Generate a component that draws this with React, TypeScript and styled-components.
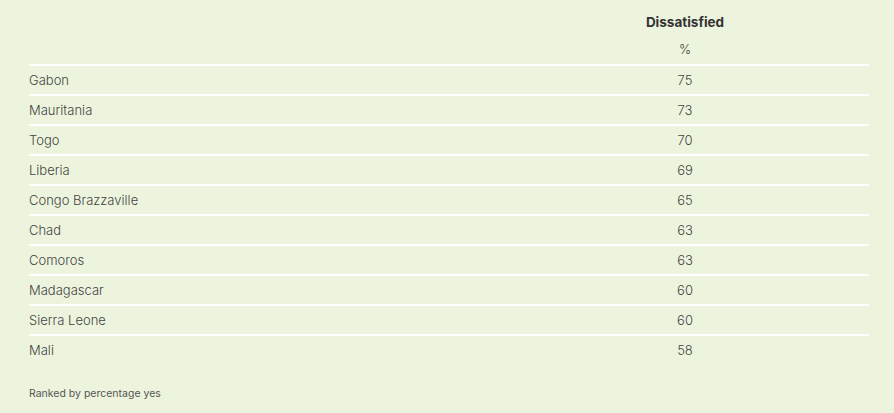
import styled, { createGlobalStyle } from "styled-components";

const rows: [string, number][] = [
  ["Gabon", 75],
  ["Mauritania", 73],
  ["Togo", 70],
  ["Liberia", 69],
  ["Congo Brazzaville", 65],
  ["Chad", 63],
  ["Comoros", 63],
  ["Madagascar", 60],
  ["Sierra Leone", 60],
  ["Mali", 58],
];

const Global = createGlobalStyle`
  html, body {
    margin: 0;
    background: #edf4de;
    font-family: Inter, "Noto Sans", sans-serif;
  }
`;

const App = () => {
  return (
    <Page>
      <Global />
      <Table>
        <HeadRow>
          <span />
          <HeadCell>Dissatisfied</HeadCell>
        </HeadRow>
        <UnitRow>
          <span />
          <Unit>%</Unit>
        </UnitRow>
        {rows.map(([country, value]) => (
          <Row key={country}>
            <Country>{country}</Country>
            <Value>{value}</Value>
          </Row>
        ))}
      </Table>
      <Note>Ranked by percentage yes</Note>
    </Page>
  );
};

export default App;

const Page = styled.div`
  width: 894px;
  height: 413px;
  padding: 12px 25px 0 29px;
  box-sizing: border-box;
`;

const Table = styled.div`
  display: flex;
  flex-direction: column;
`;

const Grid = styled.div`
  display: grid;
  grid-template-columns: 472px 1fr;
  align-items: center;
`;

const HeadRow = styled(Grid)`
  height: 20px;
`;

const HeadCell = styled.div`
  text-align: center;
  font-weight: 700;
  font-size: 13.5px;
  color: #333333;
`;

const UnitRow = styled(Grid)`
  height: 32px;
  padding-bottom: 2px;
  box-sizing: border-box;
`;

const Unit = styled.div`
  text-align: center;
  font-size: 13px;
  font-weight: 300;
  color: #444444;
  padding-top: 4px;
`;

const Row = styled(Grid)`
  height: 30px;
  border-top: 2px solid #ffffff;
  box-sizing: border-box;
  font-size: 13px;
  font-weight: 300;
  color: #444444;
`;

const Country = styled.div``;

const Value = styled.div`
  text-align: center;
`;

const Note = styled.div`
  margin-top: 23px;
  font-size: 10.5px;
  color: #555555;
`;
